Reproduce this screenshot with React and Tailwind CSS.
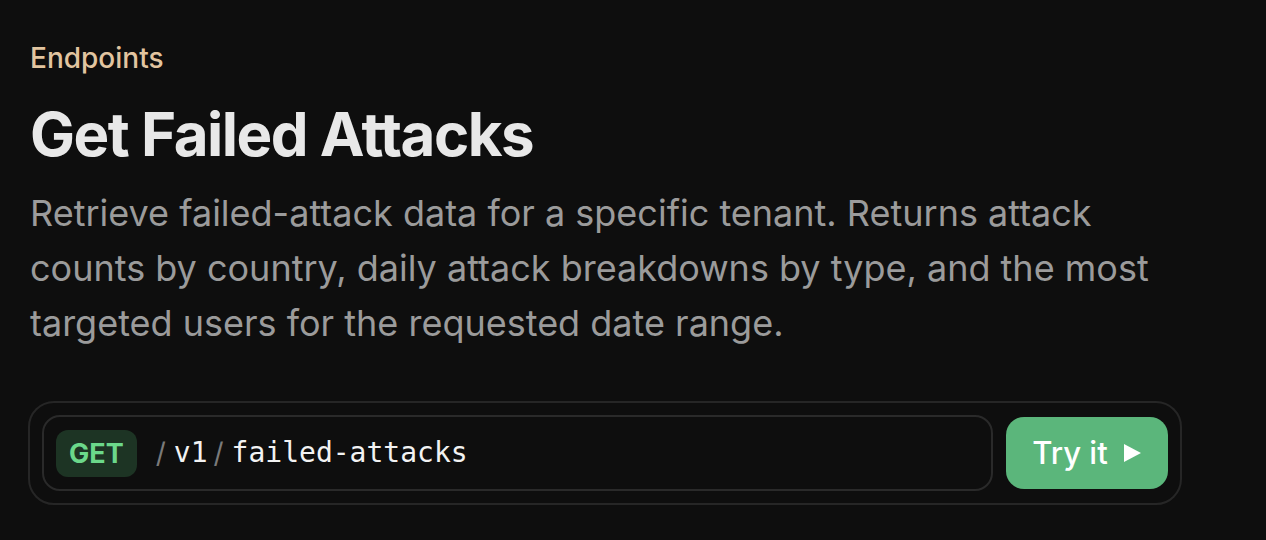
import React from 'react';

function App() {
  return (
    <div className="min-h-screen w-full bg-[#0e0e0e] px-[30px] pt-[42px] font-['Inter','Noto_Sans',sans-serif]">
      {/* Header */}
      <p className="text-[28px] leading-[32px] font-medium text-[#e2c5a0]">Endpoints</p>
      <h1 className="mt-[28px] text-[60px] leading-[64px] font-bold tracking-[-0.025em] text-[#e8e8e8]">Get Failed Attacks</h1>
      <p className="mt-[20px] max-w-[1130px] text-[36px] leading-[55px] text-[#9b9b9b]">
        Retrieve failed-attack data for a specific tenant. Returns attack counts by country, daily attack breakdowns by type, and the most targeted users for the requested date range.
      </p>

      {/* Endpoint bar */}
      <div className="mt-[50px] ml-[-2px] flex w-[1154px] items-center gap-[13px] rounded-[26px] border-2 border-[#262626] p-[12px]">
        <div className="flex h-[76px] flex-1 items-center rounded-[18px] border-2 border-[#2a2a2a] px-[12px]">
          <span className="rounded-[12px] bg-[#1d3424] px-[13px] py-[7px] text-[27px] leading-[33px] font-bold text-[#6bd88a]">GET</span>
          <span className="ml-[19px] flex items-center text-[28px] text-[#f2f2f2]">
            <span className="text-[#7a7a7a]">/</span>
            <span className="ml-[8px] font-['DejaVu_Sans_Mono',monospace]">v1</span>
            <span className="ml-[6px] text-[#7a7a7a]">/</span>
            <span className="ml-[8px] font-['DejaVu_Sans_Mono',monospace]">failed-attacks</span>
          </span>
        </div>
        <button className="flex h-[72px] w-[162px] items-center justify-center gap-[15px] rounded-[18px] bg-[#5bb67b] text-[31px] font-medium text-white">
          <span>Try it</span>
          <svg width="19" height="20" viewBox="0 0 19 20"><path d="M1 1 L18 10 L1 19 Z" fill="white" /></svg>
        </button>
      </div>
    </div>
  );
}

export default App;
